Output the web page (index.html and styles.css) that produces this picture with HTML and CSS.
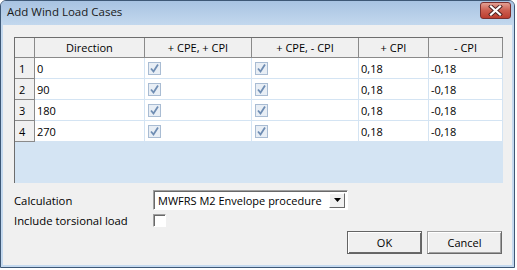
FILE: index.html
```html
<!DOCTYPE html>
<html lang="en">
<head>
    <meta charset="UTF-8">
    <title>Add Wind Load Cases</title>
    <link rel="stylesheet" href="styles.css">
</head>
<body>
    <div class="window">
        <div class="titlebar">
            <span class="title">Add Wind Load Cases</span>
            <button class="close" aria-label="Close">
                <svg width="17" height="11" viewBox="0 0 17 11">
                    <path d="M4 1.5 L13 9.5 M13 1.5 L4 9.5" stroke="#4a1f1f" stroke-width="4" stroke-linecap="square"/>
                    <path d="M4 1.5 L13 9.5 M13 1.5 L4 9.5" stroke="#ffffff" stroke-width="2.2" stroke-linecap="square"/>
                </svg>
            </button>
        </div>
        <div class="client">
            <div class="grid">
                <div class="cell head"></div>
                <div class="cell head">Direction</div>
                <div class="cell head">+ CPE, + CPI</div>
                <div class="cell head">+ CPE, - CPI</div>
                <div class="cell head">+ CPI</div>
                <div class="cell head">- CPI</div>

                <div class="cell rowhead">1</div>
                <div class="cell">0</div>
                <div class="cell"><span class="check"></span></div>
                <div class="cell"><span class="check"></span></div>
                <div class="cell">0,18</div>
                <div class="cell">-0,18</div>

                <div class="cell rowhead">2</div>
                <div class="cell">90</div>
                <div class="cell"><span class="check"></span></div>
                <div class="cell"><span class="check"></span></div>
                <div class="cell">0,18</div>
                <div class="cell">-0,18</div>

                <div class="cell rowhead">3</div>
                <div class="cell">180</div>
                <div class="cell"><span class="check"></span></div>
                <div class="cell"><span class="check"></span></div>
                <div class="cell">0,18</div>
                <div class="cell">-0,18</div>

                <div class="cell rowhead">4</div>
                <div class="cell">270</div>
                <div class="cell"><span class="check"></span></div>
                <div class="cell"><span class="check"></span></div>
                <div class="cell">0,18</div>
                <div class="cell">-0,18</div>
            </div>

            <div class="form-row calc-row">
                <label class="label">Calculation</label>
                <div class="select">
                    <span class="select-text">MWFRS M2 Envelope procedure</span>
                    <span class="select-arrow">
                        <svg width="7" height="4" viewBox="0 0 7 4"><path d="M0 0 H7 L3.5 4 Z" fill="#000"/></svg>
                    </span>
                </div>
            </div>
            <div class="form-row torsion-row">
                <label class="label">Include torsional load</label>
                <span class="box"></span>
            </div>
            <div class="buttons">
                <button class="btn default">OK</button>
                <button class="btn">Cancel</button>
            </div>
        </div>
    </div>
</body>
</html>
```

FILE: styles.css
```css
body {
    margin: 0;
    background-color: #ffffff;
    font-family: "Open Sans", "Noto Sans", sans-serif;
    font-size: 11px;
    color: #000000;
}
.window {
    width: 515px;
    height: 268px;
    box-sizing: border-box;
    border: 1px solid #3e5876;
    border-radius: 6px 6px 0 0;
    background-color: #c4d9ef;
    padding: 0 2px 2px;
    display: flex;
    flex-direction: column;
}
.titlebar {
    height: 24px;
    flex: none;
    display: flex;
    align-items: center;
    justify-content: space-between;
    background: linear-gradient(#a8c3e2, #c3d8ee);
    margin: 0 -2px;
    padding: 0 2px 0 6px;
    border-radius: 5px 5px 0 0;
}
.title {
    font-size: 11.5px;
    color: #1a1a1a;
    margin-top: -3px;
}
.close {
    width: 31px;
    height: 17px;
    margin: -5px 1px 0 0;
    padding: 0;
    border: 1px solid #7a3030;
    border-radius: 3px;
    background: linear-gradient(#e3a093, #cc5d4f 50%, #bc3d2f);
    display: flex;
    align-items: center;
    justify-content: center;
}
.client {
    flex: 1;
    background-color: #f0f0f0;
    padding: 12px 9px 0 11px;
    display: flex;
    flex-direction: column;
}
.grid {
    height: 146px;
    box-sizing: border-box;
    border-top: 1px solid #6d6d6d;
    border-left: 1px solid #6d6d6d;
    background-color: #d4e4f3;
    display: grid;
    grid-template-columns: 20px 110px 107px 107px 70px 74px;
    grid-template-rows: 20px repeat(4, 21px);
}
.cell {
    box-sizing: border-box;
    background-color: #ffffff;
    border-right: 1px solid #d4e4f3;
    border-bottom: 1px solid #d4e4f3;
    padding-left: 2px;
    display: flex;
    align-items: center;
}
.head {
    background-color: #f0f0f0;
    border-right-color: #8a8a8a;
    border-bottom-color: #8a8a8a;
    justify-content: center;
    padding-left: 0;
}
.rowhead {
    background-color: #f0f0f0;
    border-right-color: #8a8a8a;
    border-bottom-color: #8a8a8a;
    padding-left: 4px;
}
.check {
    width: 13px;
    height: 13px;
    box-sizing: border-box;
    margin-left: 1px;
    border: 1px solid #a9bcd3;
    background: #e8eef5 url("data:image/svg+xml,%3Csvg xmlns='http://www.w3.org/2000/svg' width='11' height='11' viewBox='0 0 11 11'%3E%3Cpath d='M2 5.5 L4.5 8.5 L9 1.5' fill='none' stroke='%236f8db3' stroke-width='1.8'/%3E%3C/svg%3E") center no-repeat;
}
.form-row {
    display: flex;
    align-items: center;
    font-size: 11.3px;
}
.label {
    width: 139px;
    flex: none;
}
.calc-row {
    margin-top: 7px;
    height: 20px;
}
.select {
    width: 195px;
    height: 20px;
    box-sizing: border-box;
    border-top: 1px solid #a0a0a0;
    border-left: 1px solid #a0a0a0;
    border-right: 1px solid #ffffff;
    border-bottom: 1px solid #ffffff;
    box-shadow: inset 1px 1px #696969;
    background-color: #ffffff;
    display: flex;
    align-items: center;
    justify-content: space-between;
    padding: 0 2px 0 4px;
    font-size: 11px;
}
.select-arrow {
    width: 16px;
    height: 15px;
    box-sizing: border-box;
    background-color: #f0f0f0;
    border-top: 1px solid #ffffff;
    border-left: 1px solid #ffffff;
    border-right: 1px solid #696969;
    border-bottom: 1px solid #696969;
    display: flex;
    align-items: center;
    justify-content: center;
}
.torsion-row {
    margin-top: 4px;
    height: 13px;
}
.box {
    width: 13px;
    height: 13px;
    box-sizing: border-box;
    border-top: 1px solid #a0a0a0;
    border-left: 1px solid #a0a0a0;
    border-right: 1px solid #ffffff;
    border-bottom: 1px solid #ffffff;
    box-shadow: inset 1px 1px #696969;
    background-color: #ffffff;
}
.buttons {
    margin-top: 4px;
    display: flex;
    justify-content: flex-end;
    gap: 5px;
    padding-right: 1px;
}
.btn {
    width: 75px;
    height: 23px;
    font-family: inherit;
    font-size: 11px;
    color: #000000;
    background-color: #f0f0f0;
    border: 1px solid #a0a0a0;
    border-right-color: #696969;
    border-bottom-color: #696969;
    box-shadow: inset 1px 1px #ffffff, inset -1px -1px #a0a0a0;
    padding: 0;
}
.btn.default {
    border: 1px solid #646464;
    box-shadow: inset 1px 1px #ffffff, inset -1px -1px #696969;
}
```
